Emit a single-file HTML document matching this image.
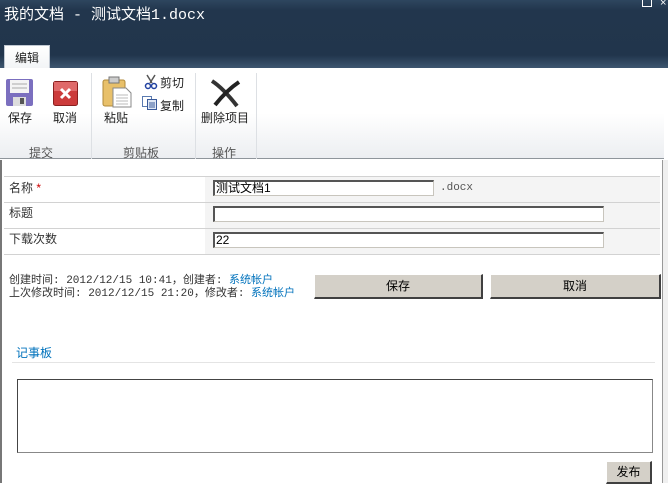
<!DOCTYPE html>
<html><head><meta charset="utf-8"><style>
*{margin:0;padding:0;box-sizing:border-box}
body{width:668px;height:483px;overflow:hidden;background:#fff;font-family:"Liberation Sans","Noto Sans CJK SC","WenQuanYi Zen Hei",sans-serif;font-size:12px;color:#333;position:relative}
.abs{position:absolute}
#top{left:0;top:0;width:668px;height:68px;background:linear-gradient(#2e465f 0,#22364d 10px,#21354c 55px,#3d5670 68px)}
#title{left:4px;top:3px;color:#fff;font-size:15px;font-family:"Liberation Mono","Noto Sans CJK SC",monospace;letter-spacing:0}
#tab{left:4px;top:45px;width:46px;height:24px;background:linear-gradient(#fff,#f2f4f6);border:1px solid #c0c8d2;border-bottom:none;text-align:center;line-height:24px;color:#222}
#ribbon{left:0;top:68px;width:664px;height:91px;background:linear-gradient(#fff 0,#fff 45px,#eceef1 90px);border-bottom:1px solid #8f959b}
.sep{top:73px;width:1px;height:86px;background:#dde0e4}
.lbl{color:#222;font-size:12px}
.grp{color:#555;top:144px;font-size:12px}
.rowline{left:4px;width:656px;height:1px;background:#d2d2d2}
.inp{background:#fff;border:1px solid #c8c5bd;border-top:2px solid #555;border-left:2px solid #555;height:16px;font-size:12px;color:#000;line-height:12px;padding-left:1px}
.btn{background:#d4d0c8;border-right:2px solid #404040;border-bottom:2px solid #404040;border-top:1px solid #fff;border-left:1px solid #fff;text-align:center;color:#000;font-size:12px}
a{color:#0072bc;text-decoration:none}
.mono{font-family:"Liberation Mono","Noto Sans CJK SC",monospace}
</style></head><body>
<div id="top" class="abs"></div>
<div id="title" class="abs">我的文档 - 测试文档1.docx</div>
<div class="abs" style="left:642px;top:0;width:10px;height:7px;border:1.5px solid #fff;border-top:none"></div>
<div class="abs" style="left:660px;top:-3px;color:#fff;font-size:11px">×</div>
<div id="tab" class="abs">编辑</div>
<div id="ribbon" class="abs"></div>
<div class="abs sep" style="left:91px"></div>
<div class="abs sep" style="left:195px"></div>
<div class="abs sep" style="left:256px"></div>
<svg class="abs" style="left:6px;top:79px" width="28" height="28"><rect x="0" y="0" width="27" height="27" rx="2" fill="#7b6fbf"/><rect x="4" y="1" width="19" height="13" fill="#f4f4f4"/><line x1="6" y1="5" x2="21" y2="5" stroke="#aaa"/><line x1="6" y1="9" x2="21" y2="9" stroke="#aaa"/><rect x="7" y="18" width="13" height="9" fill="#ddd"/><rect x="14" y="19" width="4" height="6" fill="#555"/></svg>
<div class="abs lbl" style="left:8px;top:109px">保存</div>
<svg class="abs" style="left:53px;top:81px" width="25" height="25"><rect x="0.5" y="0.5" width="24" height="24" rx="2" fill="#cc3b3b" stroke="#8a2020"/><rect x="1" y="1" width="23" height="9" fill="#e06a6a"/><path d="M8 8 L17 17 M17 8 L8 17" stroke="#fff" stroke-width="3"/></svg>
<div class="abs lbl" style="left:53px;top:109px">取消</div>
<svg class="abs" style="left:102px;top:76px" width="30" height="32"><rect x="1" y="4" width="22" height="26" rx="2" fill="#e8c06a" stroke="#b08a3a"/><rect x="7" y="1" width="10" height="6" fill="#ccc" stroke="#777"/><path d="M11 12 H24 L29 17 V31 H11 Z" fill="#fff" stroke="#888"/><path d="M14 19H26M14 22H26M14 25H26M14 28H26" stroke="#bbb"/></svg>
<div class="abs lbl" style="left:104px;top:109px">粘贴</div>
<svg class="abs" style="left:144px;top:74px" width="14" height="16"><path d="M3 1 L8 9 M11 1 L6 9" stroke="#555" stroke-width="1.5"/><circle cx="4" cy="12" r="2.5" fill="none" stroke="#2040a0" stroke-width="1.5"/><circle cx="10" cy="12" r="2.5" fill="none" stroke="#2040a0" stroke-width="1.5"/></svg>
<div class="abs lbl" style="left:160px;top:74px">剪切</div>
<svg class="abs" style="left:142px;top:96px" width="16" height="14"><rect x="0.5" y="0.5" width="9" height="10" fill="#fff" stroke="#5a7ab0"/><rect x="5.5" y="3.5" width="9" height="10" fill="#dfe8f6" stroke="#3a5a9a"/><path d="M7 7h6M7 9h6M7 11h6" stroke="#3a5a9a"/></svg>
<div class="abs lbl" style="left:160px;top:97px">复制</div>
<svg class="abs" style="left:209px;top:78px" width="32" height="30"><path d="M3 3 Q14 10 28 28" stroke="#333" stroke-width="4" fill="none"/><path d="M30 4 Q18 12 6 27" stroke="#222" stroke-width="4" fill="none"/></svg>
<div class="abs lbl" style="left:201px;top:109px">删除项目</div>
<div class="abs grp" style="left:29px">提交</div>
<div class="abs grp" style="left:123px">剪贴板</div>
<div class="abs grp" style="left:212px">操作</div>
<div class="abs" style="left:0;top:160px;width:2px;height:323px;background:#777"></div>
<div class="abs" style="left:662px;top:160px;width:6px;height:323px;background:#f0f0f0;border-left:1px solid #999"></div>
<div class="abs" style="left:205px;top:177px;width:455px;height:77px;background:#f4f4f4"></div>
<div class="abs rowline" style="top:176px"></div>
<div class="abs rowline" style="top:202px"></div>
<div class="abs rowline" style="top:228px"></div>
<div class="abs rowline" style="top:254px"></div>
<div class="abs" style="left:9px;top:179px">名称 <span style="color:#c00">*</span></div>
<div class="abs" style="left:9px;top:204px">标题</div>
<div class="abs" style="left:9px;top:230px">下载次数</div>
<div class="abs inp" style="left:213px;top:180px;width:221px">测试文档1</div>
<div class="abs mono" style="left:440px;top:182px;font-size:11px;color:#555">.docx</div>
<div class="abs inp" style="left:213px;top:206px;width:391px"></div>
<div class="abs inp" style="left:213px;top:232px;width:391px">22</div>
<div class="abs mono" style="left:9px;top:275px;line-height:13px;font-size:11px;white-space:nowrap">创建时间: 2012/12/15 10:41，创建者: <a>系统帐户</a><br>上次修改时间: 2012/12/15 21:20，修改者: <a>系统帐户</a></div>
<div class="abs btn" style="left:314px;top:274px;width:169px;height:25px;line-height:22px">保存</div>
<div class="abs btn" style="left:490px;top:274px;width:171px;height:25px;line-height:22px">取消</div>
<div class="abs" style="left:16px;top:344px;color:#0072bc;font-size:12px">记事板</div>
<div class="abs" style="left:12px;top:362px;width:643px;height:1px;background:#e4e4e4"></div>
<div class="abs" style="left:17px;top:379px;width:636px;height:74px;border:1px solid #444;border-right-color:#888;border-bottom-color:#888;background:#fff"></div>
<div class="abs btn" style="left:606px;top:461px;width:46px;height:23px;line-height:20px">发布</div>
</body></html>
